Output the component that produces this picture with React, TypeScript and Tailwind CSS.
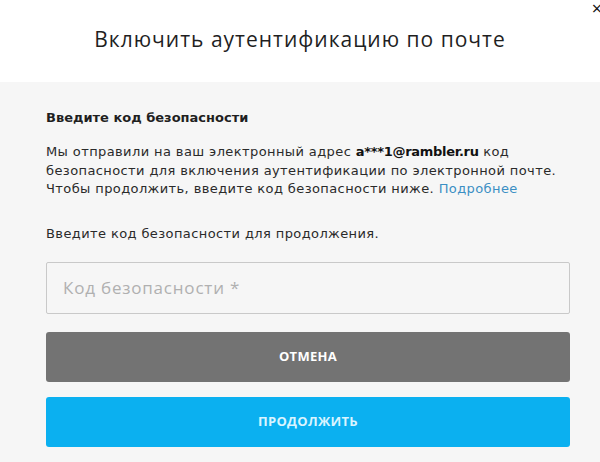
export default function App() {
  return (
    <div
      className="relative w-[600px] h-[462px] overflow-hidden bg-[#f6f6f6] text-[#1f1f1f]"
      style={{ fontFamily: '"Open Sans", Inter, sans-serif' }}
    >
      {/* Header */}
      <header className="h-[82px] bg-white flex items-center justify-center">
        <h1 className="text-[21px] font-normal tracking-[1px] pb-[2px]">Включить аутентификацию по почте</h1>
      </header>
      <button className="absolute right-[-4px] top-[-1px] w-[14px] h-[16px] text-[#111] text-[18px] leading-none">
        ×
      </button>

      <section
        className="pl-[46px] pt-[27px] pr-[4px]"
        style={{ fontFamily: '"DejaVu Sans", "Open Sans", sans-serif' }}
      >
        <h2 className="text-[13px] font-bold leading-[18px]">Введите код безопасности</h2>
        <p className="mt-[16px] text-[13px] leading-[18.5px] text-[#2a2a2a] tracking-[0.4px] whitespace-nowrap">
          Мы отправили на ваш электронный адрес{' '}
          <b className="font-bold text-[#111] tracking-[-0.3px]">a***1@rambler.ru</b> код
          <br />
          безопасности для включения аутентификации по электронной почте.
          <br />
          Чтобы продолжить, введите код безопасности ниже. <a className="text-[#3b8fc4]">Подробнее</a>
        </p>
        <p className="mt-[26px] text-[13px] leading-[18px] text-[#2a2a2a] tracking-[0.4px]">
          Введите код безопасности для продолжения.
        </p>
      </section>

      <div className="pr-[30px] pl-[46px]">
        <div className="mt-[19px] h-[52px] border border-[#c9c9c9] rounded-[2px] bg-[#f6f6f6] flex items-center px-[16px]">
          <span className="text-[17px] text-[#b0b0b0] tracking-[0.8px]">Код безопасности *</span>
        </div>

        <div className="mt-[18px] flex flex-col gap-[15px]">
          <button className="h-[50px] rounded-[3px] bg-[#737373] text-white text-[13px] font-bold tracking-[0.3px]">
            ОТМЕНА
          </button>
          <button className="h-[50px] rounded-[3px] bg-[#0bb0f0] text-[#d9f4ff] text-[13px] font-bold tracking-[0.3px]">
            ПРОДОЛЖИТЬ
          </button>
        </div>
      </div>
    </div>
  );
}
